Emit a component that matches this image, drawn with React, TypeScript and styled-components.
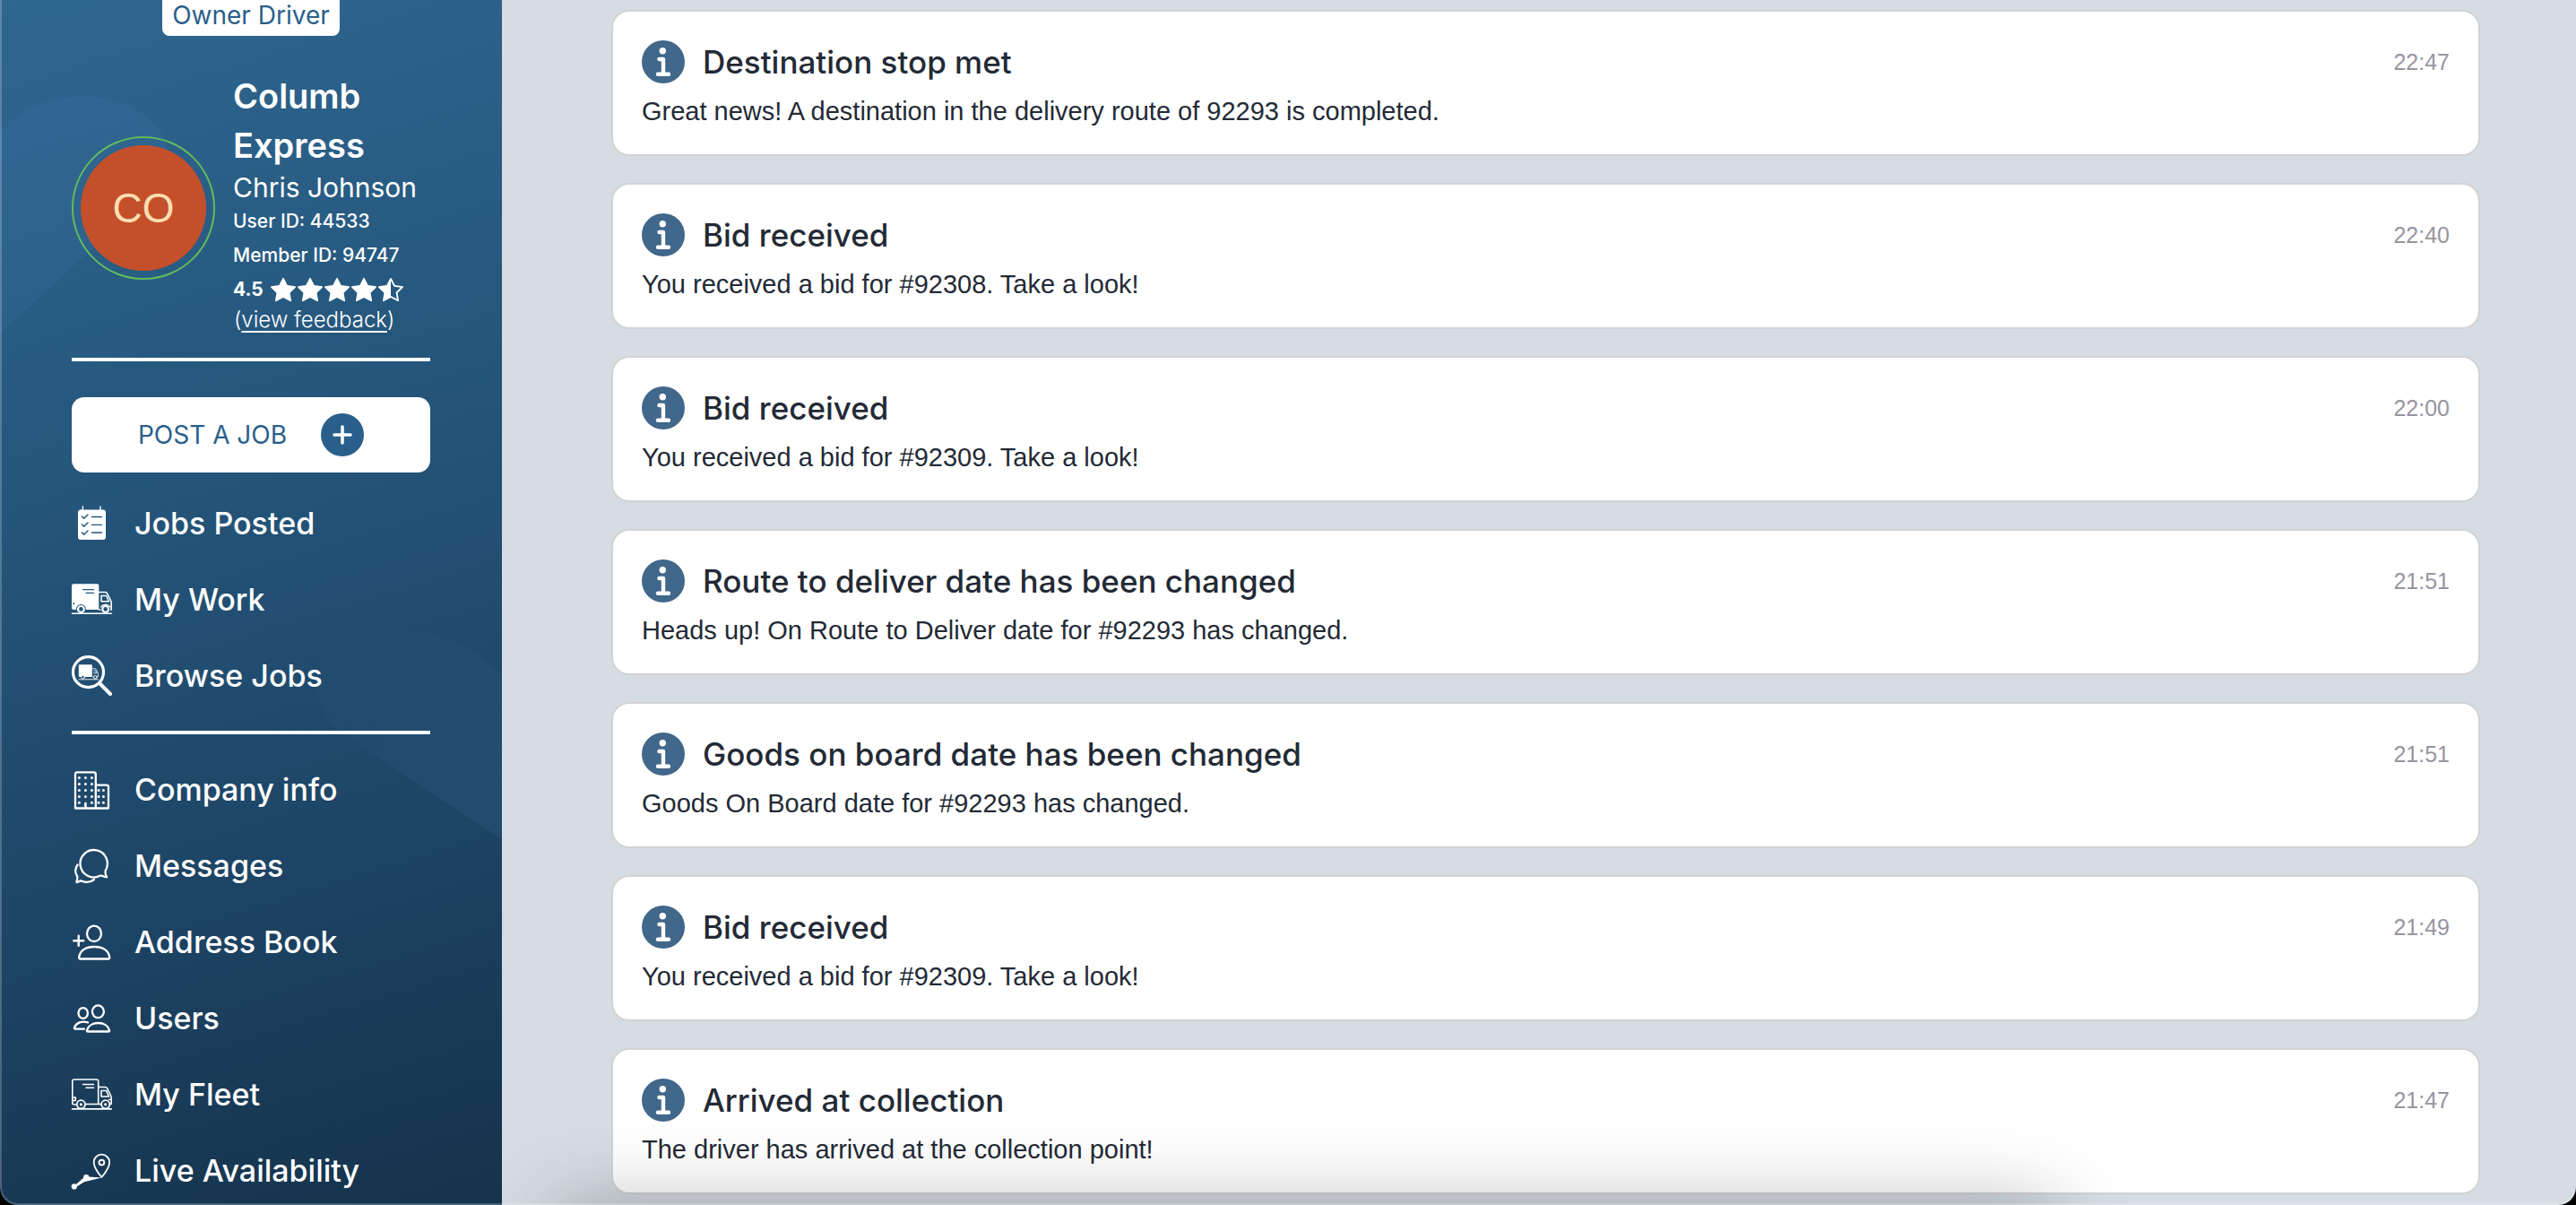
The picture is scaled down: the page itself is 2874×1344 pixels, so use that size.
import React from "react";
import styled, { createGlobalStyle } from "styled-components";
import { BsStarFill, BsStarHalf } from "react-icons/bs";

const GlobalStyle = createGlobalStyle`
  *, *::before, *::after { box-sizing: border-box; }
  html, body { margin: 0; background: #000; }
  body { font-family: Inter, "Open Sans", sans-serif; }
`;

const helvetica = `"Liberation Sans", Arial, sans-serif`;

const Shell = styled.div`
  position: relative;
  display: grid;
  grid-template-columns: 560px minmax(0, 1fr);
  height: 100vh;
  overflow: hidden;
  border-radius: 0 0 20px 20px;

  &::after {
    content: "";
    position: absolute;
    inset: 0;
    border: solid rgba(255, 255, 255, 0.22);
    border-width: 0 0 2px 2px;
    border-radius: 0 0 20px 20px;
    pointer-events: none;
  }
`;

const Sidebar = styled.aside`
  position: relative;
  z-index: 0;
  padding: 0 80px;
  color: #fff;
  background: linear-gradient(163deg, #2f6690 0%, #285b82 26%, #225074 48%, #1d4363 72%, #14324b 100%);
`;

const Backdrop = styled.svg`
  position: absolute;
  inset: 0;
  z-index: -1;
  width: 100%;
  height: 100%;
`;

const Badge = styled.div`
  width: fit-content;
  height: 40px;
  margin: 0 auto;
  padding: 0 11px;
  border-radius: 0 0 8px 8px;
  background: #fff;
  color: #2a5f8b;
  font-size: 28px;
  line-height: 34px;
`;

const Profile = styled.section`
  display: flex;
  align-items: center;
  gap: 20px;
  margin-top: 40px;
`;

const AvatarRing = styled.div`
  flex: none;
  width: 160px;
  height: 160px;
  padding: 8px;
  border: 2px solid #62bb5c;
  border-radius: 50%;
`;

const Avatar = styled.div`
  display: grid;
  place-items: center;
  height: 100%;
  border-radius: 50%;
  background: #c4502b;
  color: #ffdfb1;
  font: 46px ${helvetica};
`;

const Details = styled.div`
  min-width: 0;
  padding-bottom: 12px;
`;

const CompanyName = styled.h2`
  margin: 0;
  font-size: 38px;
  font-weight: 600;
  line-height: 55px;
`;

const PersonName = styled.p`
  margin: 0;
  font-size: 30px;
  line-height: 38px;
  white-space: nowrap;
`;

const Meta = styled.p`
  display: flex;
  align-items: center;
  gap: 8px;
  margin: 0;
  font-size: 21px;
  font-weight: 500;
  line-height: 38px;
  white-space: nowrap;
`;

const Stars = styled.span`
  display: flex;
  gap: 2px;
`;

const Feedback = styled.p`
  margin: 0;
  padding-left: 1px;
  font-size: 24px;
  font-weight: 300;
  line-height: 30px;
  white-space: nowrap;

  a {
    color: inherit;
    text-decoration: underline 2px;
    text-underline-offset: 4px;
  }
`;

const Divider = styled.hr<{ $top: number; $bottom: number }>`
  height: 4px;
  margin: ${(p) => p.$top}px 0 ${(p) => p.$bottom}px;
  border: 0;
  background: #fff;
`;

const PostButton = styled.button`
  display: flex;
  align-items: center;
  justify-content: center;
  gap: 38px;
  width: 100%;
  height: 84px;
  margin-bottom: 14px;
  padding: 0;
  border: 0;
  border-radius: 14px;
  background: #fff;
  color: #2a5f8b;
  font: 28px Inter, sans-serif;
`;

const NavList = styled.ul`
  margin: 0;
  padding: 0;
  list-style: none;
`;

const NavLink = styled.a`
  display: flex;
  align-items: center;
  gap: 24px;
  height: 85px;
  color: #fff;
  font-size: 34px;
  font-weight: 500;
  text-decoration: none;
  white-space: nowrap;
`;

const NavIcon = styled.svg`
  flex: none;
  width: 46px;
  height: 46px;
  overflow: visible;
  fill: none;
  stroke: #fff;
  stroke-width: 2.3;
  stroke-linecap: round;
  stroke-linejoin: round;
`;

const Main = styled.main`
  position: relative;
  min-width: 0;
  padding: 11px 107px 0 122px;
  background: #d5dce3;
  overflow: hidden;

  /* soft shade rising from below the window */
  &::after {
    content: "";
    position: absolute;
    top: 100%;
    left: 60px;
    width: 1670px;
    height: 100px;
    box-shadow: 0 0 90px rgba(0, 0, 0, 0.31);
    pointer-events: none;
  }
`;

const Feed = styled.ul`
  display: flex;
  flex-direction: column;
  gap: 30px;
  margin: 0;
  padding: 0;
  list-style: none;
`;

const Card = styled.li`
  height: 163px;
  padding: 32px;
  border: 2px solid #d2d3d4;
  border-radius: 20px;
  background: #fff;
  color: #232a35;
`;

const CardHead = styled.div`
  display: flex;
  align-items: center;
  gap: 20px;
  height: 48px;
`;

const CardTitle = styled.h3`
  flex: 1;
  margin: 0;
  font-size: 35px;
  font-weight: 500;
  line-height: 46px;
`;

const Time = styled.time`
  color: #96959f;
  font: 25px ${helvetica};
`;

const CardText = styled.p`
  margin: 13px 0 0;
  font: 29px/36px ${helvetica};
`;

const InfoIcon = () => (
  <svg width="48" height="48" viewBox="0 0 48 48" aria-hidden="true">
    <circle cx="24" cy="24" r="24" fill="#41678a" />
    <circle cx="23.3" cy="11.7" r="3.7" fill="#fff" />
    <path d="M19.5 21H24V37.5M18 37.8H30" fill="none" stroke="#fff" strokeWidth="4.4" strokeLinecap="round" strokeLinejoin="round" />
  </svg>
);

const navy = "#24537a";

const icons = {
  jobs: (
    <>
      <rect x="7.5" y="8" width="30" height="32.5" rx="2" fill="#fff" stroke="#fff" strokeWidth="1" />
      <path d="M12.4 4V8M32 4V8" strokeWidth="1.4" />
      <path d="M11.5 15L13.7 17.2L18 13M11.5 24L13.7 26.2L18 22M11.5 33L13.7 35.2L18 31" stroke={navy} strokeWidth="1.4" />
      <path d="M22.5 15.5H33.5M22.5 24.3H33.5M22.5 33H33.5" stroke={navy} strokeWidth="1.3" />
    </>
  ),
  work: (
    <>
      <path d="M2 5.3H28.5Q30.3 5.3 30.3 7V34H2Q0 34 0 32V7.3Q0 5.3 2 5.3Z" fill="#fff" stroke="none" />
      <path d="M30.5 14.5H37.5Q39 14.5 39.6 15.8L43.2 23Q44.2 25 44.2 27V34H30.5" strokeWidth="1.6" />
      <path d="M33 18.5H38.6L41.5 24.7H33Z" strokeWidth="1.5" />
      <path d="M12.5 11.7H24.5M16 15.3H24.5" stroke={navy} strokeWidth="1.2" />
      <circle cx="2.4" cy="27.3" r="1" fill={navy} stroke="none" />
      <circle cx="10.4" cy="33.4" r="5.4" fill={navy} stroke="none" />
      <circle cx="37.7" cy="33.4" r="5.4" fill={navy} stroke="none" />
      <circle cx="10.4" cy="33.4" r="3.4" strokeWidth="2.2" />
      <circle cx="37.7" cy="33.4" r="3.4" strokeWidth="2.2" />
      <path d="M32.6 31Q34 28.4 37.7 28.4T42.8 31" strokeWidth="1.3" />
      <path d="M0.5 38.2H44.3" strokeWidth="1.6" />
    </>
  ),
  browse: (
    <>
      <circle cx="18.5" cy="18.7" r="17" strokeWidth="3.2" />
      <path d="M31 31L43 43" strokeWidth="4" />
      <rect x="7.8" y="10.2" width="15" height="13.8" rx="0.8" fill="#fff" stroke="none" />
      <path d="M23.3 14.8H26.6L29.3 19.5V24H23.3M24.5 17H26.5L28 19.7H24.5" strokeWidth="0.8" />
      <circle cx="12.5" cy="24.2" r="1.8" fill="#224f73" strokeWidth="0.9" />
      <circle cx="26.3" cy="24.2" r="1.8" fill="#224f73" strokeWidth="0.9" />
      <path d="M8 26.8H29.5" strokeWidth="0.9" />
    </>
  ),
  company: (
    <>
      <path d="M4 43.5V5.5Q4 3.3 6.2 3.3H24.6Q26.8 3.3 26.8 5.5V43.5ZM26.8 17.6H39Q41 17.6 41 19.6V43.5H26.8" />
      <path d="M8.4 9.4h0M15.4 9.4h0M22.4 9.4h0M8.4 16.4h0M15.4 16.4h0M22.4 16.4h0M8.4 23.4h0M15.4 23.4h0M22.4 23.4h0M8.4 30.4h0M15.4 30.4h0M22.4 30.4h0M8.4 37.2h0M22.4 37.2h0M30 23.4h0M35.4 23.4h0M30 30.4h0M35.4 30.4h0M30 37.2h0M35.4 37.2h0" strokeWidth="3" />
      <path d="M15.4 38V42.5" strokeWidth="2.6" />
    </>
  ),
  messages: (
    <>
      <path d="M37.6 28.2A15.2 15.2 0 1 0 31.5 33.8Q33 33.2 35 34.2T39.2 35.3Q37 31.5 37.6 28.2Z" />
      <path d="M6.6 21.5C3 26.5 3.7 30.7 6.2 34.5C7.2 37.2 4.9 39.5 5.6 41.2C7.8 41 8.4 39 11 39.6C16 41.6 21.5 40.8 25 38" />
    </>
  ),
  address: (
    <>
      <ellipse cx="25" cy="13.3" rx="8" ry="8.7" />
      <path d="M2.2 21.3H13.2M7.7 15.8V26.8" strokeWidth="2.4" />
      <path d="M9.5 41.5Q8 41.5 8.2 39.6C9.2 32 16 28 25.2 28S41.2 32 42.2 39.6Q42.4 41.5 40.8 41.5Z" />
    </>
  ),
  users: (
    <>
      <ellipse cx="12.7" cy="17" rx="5.2" ry="5.9" />
      <ellipse cx="29.4" cy="15.3" rx="6.5" ry="6.9" />
      <path d="M18 37.5Q16.6 37.5 17 36C18.3 31 23.5 28 29.6 28S40.8 31 42 36Q42.4 37.5 41 37.5Z" />
      <path d="M14 34.6H4Q2.5 34.6 3 33C5 27.6 11.5 25.4 18 27.4" />
    </>
  ),
  fleet: (
    <g strokeWidth="1.6">
      <path d="M5 34H2.5Q0.8 34 0.8 32V8Q0.8 6 2.8 6H27.7Q29.7 6 29.7 8V33.5M15.5 33.5H32.5M42.8 33.5H44.2V27Q44.2 25 43.2 23L39.6 15.8Q39 14.5 37.5 14.5H29.7" />
      <path d="M33 18.5H38.6L41.5 25H33ZM44 28.5H41.5M1 26H4.3V29.5H1" />
      <path d="M12.5 11.5H24.5M16 15.2H24.5" />
      <circle cx="10.4" cy="33.8" r="4.6" strokeWidth="1.8" />
      <circle cx="37.7" cy="33.8" r="4.6" strokeWidth="1.8" />
      <circle cx="10.4" cy="33.8" r="1.6" fill="#fff" stroke="none" />
      <circle cx="37.7" cy="33.8" r="1.6" fill="#fff" stroke="none" />
      <path d="M0.5 38.9H44.3" />
    </g>
  ),
  live: (
    <>
      <path d="M33.4 30C28 23.5 24.7 18 24.7 13.4A8.7 8.7 0 0 1 42.1 13.4C42.1 18 38.8 23.5 33.4 30Z" strokeWidth="1.8" />
      <circle cx="33.4" cy="13.6" r="2.9" strokeWidth="1.9" />
      <circle cx="2.8" cy="40.4" r="3.1" fill="#fff" stroke="none" />
      <circle cx="16.2" cy="30" r="3.1" fill="#fff" stroke="none" />
      <path d="M3 39.5L14 30L18.5 29.5L33.4 30.4L14 35.3L4 41.5Z" fill="#fff" stroke="none" />
    </>
  ),
};

type IconName = keyof typeof icons;

const jobLinks: [IconName, string][] = [
  ["jobs", "Jobs Posted"],
  ["work", "My Work"],
  ["browse", "Browse Jobs"],
];

const accountLinks: [IconName, string][] = [
  ["company", "Company info"],
  ["messages", "Messages"],
  ["address", "Address Book"],
  ["users", "Users"],
  ["fleet", "My Fleet"],
  ["live", "Live Availability"],
];

const notices = [
  { title: "Destination stop met", time: "22:47", text: "Great news! A destination in the delivery route of 92293 is completed." },
  { title: "Bid received", time: "22:40", text: "You received a bid for #92308. Take a look!" },
  { title: "Bid received", time: "22:00", text: "You received a bid for #92309. Take a look!" },
  { title: "Route to deliver date has been changed", time: "21:51", text: "Heads up! On Route to Deliver date for #92293 has changed." },
  { title: "Goods on board date has been changed", time: "21:51", text: "Goods On Board date for #92293 has changed." },
  { title: "Bid received", time: "21:49", text: "You received a bid for #92309. Take a look!" },
  { title: "Arrived at collection", time: "21:47", text: "The driver has arrived at the collection point!" },
];

const Nav = ({ links }: { links: [IconName, string][] }) => (
  <NavList>
    {links.map(([icon, label]) => (
      <li key={label}>
        <NavLink href="#">
          <NavIcon viewBox="0 0 46 46" aria-hidden="true">{icons[icon]}</NavIcon>
          {label}
        </NavLink>
      </li>
    ))}
  </NavList>
);

export default function App() {
  return (
    <>
      <GlobalStyle />
      <Shell>
        <Sidebar>
          <Backdrop aria-hidden="true">
            <defs>
              <linearGradient id="slope" x1="0" y1="0" x2="0.5" y2="1">
                <stop offset="0.1" stopColor="#2f6088" stopOpacity="0.04" />
                <stop offset="1" stopColor="#2f6088" stopOpacity="0.3" />
              </linearGradient>
            </defs>
            <path d="M0 147C40 95 150 92 182 152C205 200 150 235 100 280L0 372Z" fill="#3b78a8" opacity="0.2" />
            <path d="M560 752C500 690 400 690 360 740C345 770 360 805 385 820L560 936Z" fill="url(#slope)" />
          </Backdrop>
          <Badge>Owner Driver</Badge>
          <Profile>
            <AvatarRing>
              <Avatar>CO</Avatar>
            </AvatarRing>
            <Details>
              <CompanyName>Columb Express</CompanyName>
              <PersonName>Chris Johnson</PersonName>
              <Meta>User ID: 44533</Meta>
              <Meta>Member ID: 94747</Meta>
              <Meta>
                <b>4.5</b>
                <Stars aria-hidden="true">
                  {[0, 1, 2, 3].map((n) => (
                    <BsStarFill key={n} size={28} />
                  ))}
                  <BsStarHalf size={28} />
                </Stars>
              </Meta>
              <Feedback>
                (<a href="#">view feedback</a>)
              </Feedback>
            </Details>
          </Profile>
          <Divider $top={15} $bottom={40} />
          <PostButton type="button">
            POST A JOB
            <svg width="48" height="48" viewBox="0 0 48 48" aria-hidden="true">
              <circle cx="24" cy="24" r="24" fill="#2a5f8b" />
              <path d="M24 15V33M15 24H33" stroke="#fff" strokeWidth="3.6" strokeLinecap="round" />
            </svg>
          </PostButton>
          <Nav links={jobLinks} />
          <Divider $top={19} $bottom={19} />
          <Nav links={accountLinks} />
        </Sidebar>
        <Main>
          <Feed>
            {notices.map((notice, index) => (
              <Card key={index}>
                <CardHead>
                  <InfoIcon />
                  <CardTitle>{notice.title}</CardTitle>
                  <Time>{notice.time}</Time>
                </CardHead>
                <CardText>{notice.text}</CardText>
              </Card>
            ))}
          </Feed>
        </Main>
      </Shell>
    </>
  );
}
